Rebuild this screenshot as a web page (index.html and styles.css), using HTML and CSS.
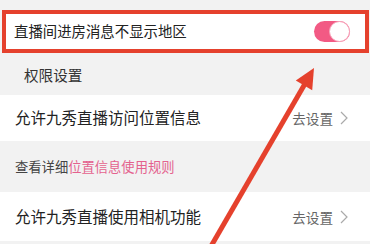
FILE: index.html
```html
<!DOCTYPE html>
<html lang="zh">
<head>
<meta charset="utf-8">
<link rel="stylesheet" href="styles.css">
</head>
<body>
<div class="page">
  <div class="top-gap"></div>
  <div class="hl-box">
    <div class="row toggle-row">
      <span class="label small">直播间进房消息不显示地区</span>
      <span class="switch"><span class="knob"></span></span>
    </div>
  </div>
  <div class="section">权限设置</div>
  <div class="row item">
    <span class="label">允许九秀直播访问位置信息</span>
    <span class="action">去设置<svg class="chev" width="8" height="14" viewBox="0 0 8 14"><path d="M1 1 L7 7 L1 13" fill="none" stroke="#aaa" stroke-width="1.2"/></svg></span>
  </div>
  <div class="note">查看详细<span class="link">位置信息使用规则</span></div>
  <div class="row item item2">
    <span class="label">允许九秀直播使用相机功能</span>
    <span class="action">去设置<svg class="chev" width="8" height="14" viewBox="0 0 8 14"><path d="M1 1 L7 7 L1 13" fill="none" stroke="#aaa" stroke-width="1.2"/></svg></span>
  </div>
  <svg class="arrow" width="370" height="244" viewBox="0 0 370 244">
    <line x1="210" y1="248" x2="306" y2="82" stroke="#e5412d" stroke-width="5"/>
    <polygon points="314,68 295.8,80.6 312.2,90.2" fill="#e5412d"/>
  </svg>
</div>
</body>
</html>
```
FILE: styles.css
```css
html, body {
  margin: 0;
  padding: 0;
}
body {
  background: #f2f2f2;
  font-family: "Noto Sans CJK SC", "Noto Sans", sans-serif;
  color: #222;
}
.page {
  position: relative;
  width: 370px;
  height: 244px;
  overflow: hidden;
}
.top-gap {
  height: 10px;
}
.hl-box {
  margin: 0 1px 0 2px;
  border: 4px solid #e5412d;
  background: #fff;
}
.row {
  display: flex;
  align-items: center;
  justify-content: space-between;
  background: #fff;
}
.toggle-row {
  height: 35px;
  padding: 0 15px 0 8px;
}
.label {
  font-size: 15.5px;
  line-height: 1;
}
.label.small {
  font-size: 14.4px;
}
.switch {
  position: relative;
  width: 36px;
  height: 21px;
  border-radius: 11px;
  background: #f25a84;
  box-sizing: border-box;
}
.knob {
  position: absolute;
  right: 0;
  top: 0;
  width: 21px;
  height: 21px;
  border-radius: 50%;
  background: #fff;
  border: 1px solid #f7a3b9;
  box-sizing: border-box;
}
.section {
  height: 42px;
  display: flex;
  align-items: center;
  padding-left: 24px;
  font-size: 14.6px;
  color: #333;
}
.item {
  height: 46px;
  padding: 0 22px 0 15px;
}
.item2 {
  height: 49px;
}
.action {
  display: flex;
  align-items: center;
  gap: 7px;
  font-size: 13.6px;
  color: #666;
}
.note {
  height: 51px;
  display: flex;
  align-items: center;
  padding-left: 15px;
  font-size: 13.3px;
  color: #444;
}
.link {
  color: #e4628e;
}
.arrow {
  position: absolute;
  left: 0;
  top: 0;
  pointer-events: none;
}
```
